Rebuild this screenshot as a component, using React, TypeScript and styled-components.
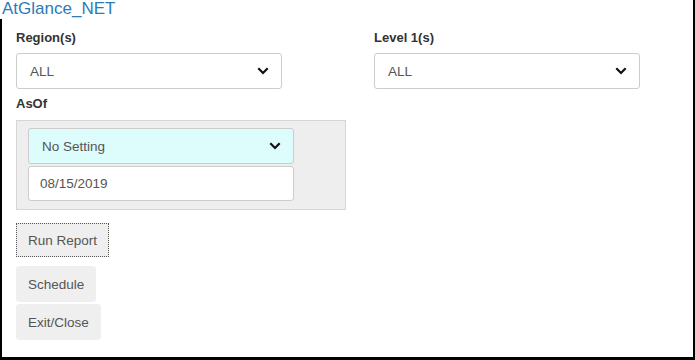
import React from 'react';
import styled, { createGlobalStyle } from 'styled-components';

const GlobalStyle = createGlobalStyle`
	html, body {
		margin: 0;
		padding: 0;
		background: #ffffff;
	}
	body {
		font-family: 'Liberation Sans', Arial, sans-serif;
	}
`;

const Frame = styled.div`
	width: 695px;
	height: 360px;
	box-sizing: border-box;
	border-right: 2px solid #000;
	border-bottom: 3px solid #000;
	display: flex;
	flex-direction: column;
	overflow: hidden;
`;

const Title = styled.div`
	height: 19px;
	padding-left: 2px;
	font-size: 17px;
	line-height: 17px;
	color: #2b7bb9;
	flex-shrink: 0;
`;

const Body = styled.div`
	flex: 1;
	border-left: 2px solid #000;
	padding: 11px 0 0 14px;
`;

const FieldRow = styled.div`
	display: grid;
	grid-template-columns: 266px 266px;
	column-gap: 92px;
`;

const Field = styled.div`
	display: flex;
	flex-direction: column;
`;

const Label = styled.div`
	font-size: 13px;
	line-height: 15px;
	font-weight: bold;
	color: #333;
	margin-bottom: 8px;
`;

const SelectBox = styled.div<{ $tint?: boolean }>`
	height: 36px;
	box-sizing: border-box;
	border: 1px solid #cccccc;
	border-radius: 3px;
	background: ${(p) => (p.$tint ? '#ddfcfc' : '#ffffff')};
	display: flex;
	align-items: center;
	justify-content: space-between;
	padding: 0 12px 0 13px;
	font-size: 13.5px;
	color: #555;
`;

const TextBox = styled.div`
	height: 35px;
	box-sizing: border-box;
	border: 1px solid #cccccc;
	border-radius: 3px;
	background: #ffffff;
	display: flex;
	align-items: center;
	padding: 0 11px;
	font-size: 13.5px;
	color: #555;
`;

const AsOfField = styled(Field)`
	margin-top: 7px;
`;

const AsOfPanel = styled.div`
	width: 330px;
	box-sizing: border-box;
	background: #eeeeee;
	border: 1px solid #d6d6d6;
	padding: 7px 0 8px 11px;
	display: flex;
	flex-direction: column;
	gap: 2px;
	margin-top: 1px;

	& > * {
		width: 266px;
	}
`;

const ButtonStack = styled.div`
	display: flex;
	flex-direction: column;
	align-items: flex-start;
	margin-top: 13px;
	gap: 2px;
`;

const ActionButton = styled.button<{ $focused?: boolean }>`
	font-family: 'Liberation Sans', Arial, sans-serif;
	font-size: 13.5px;
	color: #555;
	background: #efefef;
	border: ${(p) => (p.$focused ? '1px dotted #555' : '1px solid #efefef')};
	border-radius: ${(p) => (p.$focused ? '0' : '3px')};
	height: ${(p) => (p.$focused ? '34px' : '36px')};
	padding: 0 11px;
	margin-bottom: ${(p) => (p.$focused ? '7px' : '0')};
	cursor: pointer;
`;

const Chevron = () => (
	<svg width="12" height="8" viewBox="0 0 12 8">
		<polyline
			points="1.3,1.3 6,6 10.7,1.3"
			fill="none"
			stroke="#111"
			strokeWidth="2.2"
		/>
	</svg>
);

const Select = ({ value, tint }: { value: string; tint?: boolean }) => (
	<SelectBox $tint={tint}>
		<span>{value}</span>
		<Chevron />
	</SelectBox>
);

export default function App() {
	return (
		<>
			<GlobalStyle />
			<Frame>
				<Title>AtGlance_NET</Title>
				<Body>
					<FieldRow>
						<Field>
							<Label>Region(s)</Label>
							<Select value="ALL" />
						</Field>
						<Field>
							<Label>Level 1(s)</Label>
							<Select value="ALL" />
						</Field>
					</FieldRow>
					<AsOfField>
						<Label>AsOf</Label>
						<AsOfPanel>
							<Select value="No Setting" tint />
							<TextBox>08/15/2019</TextBox>
						</AsOfPanel>
					</AsOfField>
					<ButtonStack>
						<ActionButton $focused>Run Report</ActionButton>
						<ActionButton>Schedule</ActionButton>
						<ActionButton>Exit/Close</ActionButton>
					</ButtonStack>
				</Body>
			</Frame>
		</>
	);
}
